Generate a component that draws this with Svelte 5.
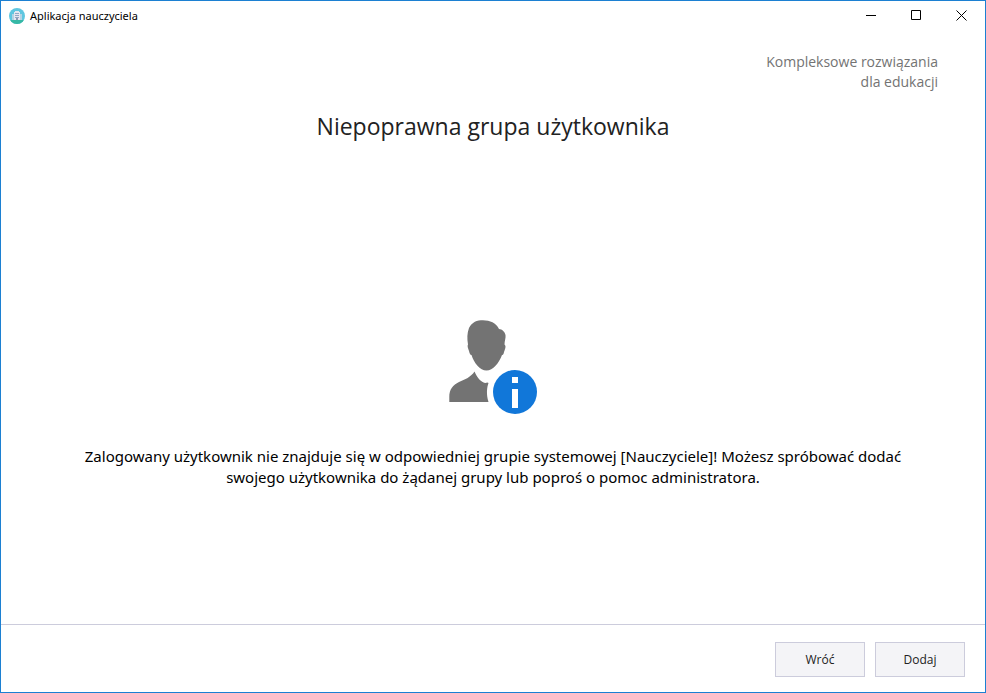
<script lang="ts">
	export let title = 'Aplikacja nauczyciela';
	export let heading = 'Niepoprawna grupa użytkownika';
	export let group = 'Nauczyciele';
	export let onBack: () => void = () => {};
	export let onAdd: () => void = () => {};
</script>

<div class="window">
	<header class="titlebar">
		<svg class="app-icon" viewBox="0 0 16 16" aria-hidden="true">
			<defs>
				<clipPath id="app-icon-clip"><circle cx="8" cy="8" r="8" /></clipPath>
			</defs>
			<g clip-path="url(#app-icon-clip)">
				<rect width="16" height="16" fill="#5fc6e0" />
				<rect y="12" width="16" height="4" fill="#36b8a5" />
				<path d="M3 12V6h2V4h1V3h4v1h1v2h2v6z" fill="#b3d3e4" />
				<path d="M5 4h1V3h4v1h1v8H5z" fill="#e6e6f0" />
				<path d="M6 5.500h4M6 7.500h4M6 9.500h4" stroke="#93a8c6" />
				<path d="M7 10h2v2H7z" fill="#9099b4" />
			</g>
		</svg>
		<span class="title">{title}</span>
		<div class="window-buttons">
			<button aria-label="Minimalizuj">
				<svg viewBox="0 0 11 11"><path d="M0 5.500h10" /></svg>
			</button>
			<button aria-label="Maksymalizuj">
				<svg viewBox="0 0 11 11"><path d="M.5 .5h9v9h-9z" /></svg>
			</button>
			<button aria-label="Zamknij">
				<svg viewBox="0 0 11 11"><path d="M.5 .5l10 10M10.500 .5l-10 10" /></svg>
			</button>
		</div>
	</header>

	<p class="tagline">Kompleksowe rozwiązania<br />dla edukacji</p>
	<h1>{heading}</h1>

	<main>
		<svg class="user-icon" viewBox="0 0 88 94" aria-hidden="true">
			<path
				fill="#737373"
				d="M19 24.500C18 19 18 13 20 8C23 2 28 .3 34 .3C41 .3 47 3 50 9C53 9 56 12 56.500 15C57 18 55.500 21 55.500 24.500C57.500 26 56 29 55 32C54.500 35 53.500 35 53 35C50 43 44 50.500 37.500 50.500C31 50.500 25 43 22.500 35C21 35 20.500 33 20 31C19 28 18 26 19 24.500Z"
			/>
			<path
				fill="#737373"
				d="M25.500 51.500C28 58 33 63 36.500 63Q38.500 62 39.500 63C38 67 37 74 39.500 82H.3V77C.3 69 4 65 10 62C16 59.500 22 57 25.500 51.500Z"
			/>
			<circle cx="66" cy="72" r="22" fill="#1177d9" />
			<path fill="#fff" d="M63 57h6v6h-6zM63 69h6v19h-6z" />
		</svg>
		<p class="message">
			Zalogowany użytkownik nie znajduje się w odpowiedniej grupie systemowej [{group}]! Możesz
			spróbować dodać swojego użytkownika do żądanej grupy lub poproś o pomoc administratora.
		</p>
	</main>

	<footer>
		<button class="action" on:click={onBack}>Wróć</button>
		<button class="action" on:click={onAdd}>Dodaj</button>
	</footer>
</div>

<style>
	:global(body) {
		margin: 0;
	}
	.window {
		display: flex;
		flex-direction: column;
		box-sizing: border-box;
		min-height: 100vh;
		border: 1px solid #1c80d2;
		background: #fff;
		color: #000;
		font-family: 'Segoe UI', 'Open Sans', 'Noto Sans', sans-serif;
	}
	.titlebar {
		display: flex;
		align-items: center;
		height: 29px;
		padding: 0 1px 0 8px;
	}
	.app-icon {
		width: 16px;
		height: 16px;
		margin-right: 5px;
	}
	.title,
	.message {
		font-family: 'Segoe UI', 'Noto Sans', sans-serif;
	}
	.title {
		font-size: 11px;
		line-height: 16px;
	}
	.window-buttons {
		display: flex;
		margin-left: auto;
	}
	.window-buttons button {
		display: flex;
		align-items: center;
		justify-content: center;
		width: 45px;
		height: 29px;
		padding: 0;
		border: 0;
		background: none;
	}
	.window-buttons svg {
		width: 11px;
		height: 11px;
		fill: none;
		stroke: #000;
	}
	.tagline {
		margin: 22px 47px 0 0;
		color: #737373;
		font-size: 14px;
		line-height: 20px;
		text-align: right;
	}
	h1 {
		margin: 18px 20px 0;
		color: #222;
		font-size: 23px;
		font-weight: 400;
		line-height: 32px;
		text-align: center;
	}
	main {
		display: flex;
		flex: 1;
		flex-direction: column;
		align-items: center;
		justify-content: center;
		padding: 42px 70px 0;
	}
	.user-icon {
		width: 88px;
		height: 94px;
	}
	.message {
		margin: 32px 0 0;
		font-size: 15px;
		line-height: 21px;
		text-align: center;
	}
	footer {
		display: flex;
		justify-content: flex-end;
		gap: 10px;
		padding: 17px 20px 15px;
		border-top: 1px solid #ccccdc;
	}
	.action {
		width: 90px;
		height: 35px;
		border: 1px solid #ccccdc;
		background: #f4f4f7;
		color: #222;
		font-family: inherit;
		font-size: 12px;
	}
</style>
